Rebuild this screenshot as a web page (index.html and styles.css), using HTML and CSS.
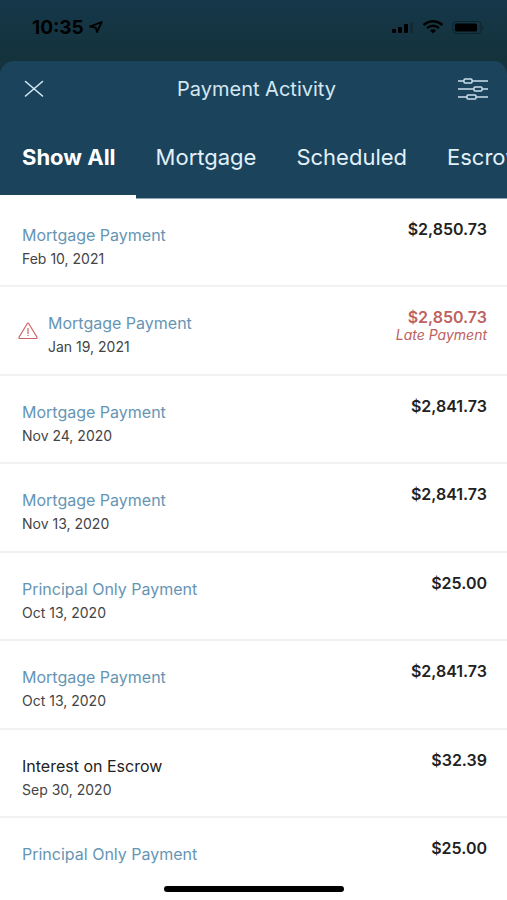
FILE: index.html
```html
<!DOCTYPE html>
<html lang="en">
  <head>
    <meta charset="utf-8">
    <meta name="viewport" content="width=device-width, initial-scale=1.0">
    <title>Payment Activity</title>
    <link rel="stylesheet" href="styles.css">
  </head>
  <body>
    <!-- Status bar -->
    <div class="status-bar">
      <div class="status-left">
        <span>10:35</span>
        <svg width="14" height="12" viewBox="0 0 14 12"><path d="M1 5.7 12.7 1 8 11 6.8 6.5Z" fill="none" stroke="#000" stroke-width="1.8" stroke-linejoin="round"/></svg>
      </div>
      <div class="status-right">
        <svg width="22" height="12" viewBox="0 0 22 12">
          <rect x="0" y="8" width="4" height="4" rx="1"/>
          <rect x="6" y="6" width="4" height="6" rx="1"/>
          <rect x="12" y="3" width="4" height="9" rx="1"/>
          <rect x="18" y="1" width="3" height="11" rx="1" opacity=".2"/>
        </svg>
        <svg width="22" height="14" viewBox="0 0 22 14">
          <path d="M1.500 5Q11-2.500 20.500 5M5 8Q11 3.500 17 8" fill="none" stroke="#000" stroke-width="2.400"/>
          <path d="M8 10.500Q11 8 14 10.500L11 13.500Z"/>
        </svg>
        <svg width="33" height="13" viewBox="0 0 33 13">
          <rect x="1" y=".5" width="28" height="12" rx="3" fill="none" stroke="#000" opacity=".35"/>
          <rect x="3" y="2.500" width="22" height="8" rx="1.500"/>
          <path d="M30.500 4.500q2 2 0 4z" opacity=".4"/>
        </svg>
      </div>
    </div>

    <main class="sheet">
      <header class="sheet-header">
        <button class="icon-btn" type="button" aria-label="Close">
          <svg width="20" height="18" viewBox="0 0 20 18"><path d="M1.500 1.500 18.500 16M18.500 1.500 1.500 16" fill="none" stroke="#d3e8f3" stroke-width="1.600" stroke-linecap="round"/></svg>
        </button>
        <h1>Payment Activity</h1>
        <button class="icon-btn" type="button" aria-label="Filter">
          <svg width="32" height="24" viewBox="0 0 32 24" fill="none" stroke="#c9dfea" stroke-width="1.500">
            <path d="M1 4h6M15 4h16M1 12h16M25 12h6M1 20h9M19 20h12"/>
            <rect x="7" y="2" width="8" height="4" rx="1"/>
            <rect x="17" y="10" width="8" height="4" rx="1"/>
            <rect x="10" y="18" width="9" height="4" rx="1"/>
          </svg>
        </button>
      </header>

      <nav class="tabs">
        <a class="tab active" href="#all">Show All</a>
        <a class="tab" href="#mortgage">Mortgage</a>
        <a class="tab" href="#scheduled">Scheduled</a>
        <a class="tab" href="#escrow">Escrow</a>
      </nav>

      <ul class="payments">
        <li class="payment">
          <div class="details">
            <a class="name" href="#">Mortgage Payment</a>
            <p class="date">Feb 10, 2021</p>
          </div>
          <div class="amount">$2,850.73</div>
        </li>
        <li class="payment late">
          <svg class="warning" width="20" height="18" viewBox="0 0 20 18" fill="none" stroke="#cf6468" stroke-width="1.200">
            <path d="M9.300 1.500 1 15.300Q.5 16.500 1.800 16.500H18.200Q19.500 16.500 19 15.300L10.700 1.500Q10 .8 9.300 1.500Z"/>
            <path d="M10 6v6M10 13v1"/>
          </svg>
          <div class="details">
            <a class="name" href="#">Mortgage Payment</a>
            <p class="date">Jan 19, 2021</p>
          </div>
          <div class="amount">$2,850.73 <em>Late Payment</em></div>
        </li>
        <li class="payment">
          <div class="details">
            <a class="name" href="#">Mortgage Payment</a>
            <p class="date">Nov 24, 2020</p>
          </div>
          <div class="amount">$2,841.73</div>
        </li>
        <li class="payment">
          <div class="details">
            <a class="name" href="#">Mortgage Payment</a>
            <p class="date">Nov 13, 2020</p>
          </div>
          <div class="amount">$2,841.73</div>
        </li>
        <li class="payment">
          <div class="details">
            <a class="name" href="#">Principal Only Payment</a>
            <p class="date">Oct 13, 2020</p>
          </div>
          <div class="amount">$25.00</div>
        </li>
        <li class="payment">
          <div class="details">
            <a class="name" href="#">Mortgage Payment</a>
            <p class="date">Oct 13, 2020</p>
          </div>
          <div class="amount">$2,841.73</div>
        </li>
        <li class="payment">
          <div class="details">
            <span class="name">Interest on Escrow</span>
            <p class="date">Sep 30, 2020</p>
          </div>
          <div class="amount">$32.39</div>
        </li>
        <li class="payment">
          <div class="details">
            <a class="name" href="#">Principal Only Payment</a>
          </div>
          <div class="amount">$25.00</div>
        </li>
      </ul>
    </main>

    <div class="home-indicator"></div>
  </body>
</html>
```
FILE: styles.css
```css
* {
  margin: 0;
  padding: 0;
  box-sizing: border-box;
}

body {
  display: flex;
  flex-direction: column;
  min-height: 100vh;
  font-family: Inter, "Liberation Sans", sans-serif;
  background: #14333d;
  overflow-x: hidden;
}

svg {
  display: block;
  flex: none;
}

/* Status bar */
.status-bar {
  display: flex;
  justify-content: space-between;
  height: 61px;
  padding: 16px 22px 0 32px;
  background: linear-gradient(#15374a, #14323b);
}

.status-left,
.status-right {
  display: flex;
  align-items: center;
  height: 22px;
}

.status-left {
  gap: 5px;
  font-size: 19px;
  font-weight: 700;
  color: #000;
}

.status-right {
  gap: 8px;
}

/* Sheet */
.sheet {
  flex: 1;
  display: flex;
  flex-direction: column;
  background: #1c435c;
  border-radius: 14px 14px 0 0;
  overflow: hidden;
}

.sheet-header {
  display: flex;
  justify-content: space-between;
  align-items: center;
  height: 55px;
  padding: 0 18px 0 24px;
}

.sheet-header h1 {
  font-size: 20px;
  font-weight: 400;
  color: #d3e8f3;
}

.icon-btn {
  display: flex;
  width: 32px;
  background: none;
  border: none;
  cursor: pointer;
}

/* Tabs */
.tabs {
  display: flex;
  height: 83px;
  overflow: hidden;
  box-shadow: inset 0 -1px #8fa9b9;
}

.tab {
  flex: none;
  padding: 28px 20px 0;
  font-size: 22px;
  line-height: 26px;
  color: #e0f1fa;
  text-decoration: none;
}

.tab.active {
  padding-left: 22px;
  font-weight: 700;
  color: #fff;
  border-bottom: 4px solid #fff;
}

/* Payment list */
.payments {
  flex: 1;
  display: flex;
  flex-direction: column;
  list-style: none;
  background: #fff;
}

.payment {
  flex: 1;
  display: flex;
  gap: 10px;
  padding: 20px 20px 12px 22px;
  border-bottom: 2px solid #f1f2f3;
}

.payment:last-child {
  flex: 0 0 82px;
  border-bottom: none;
}

.payment.late {
  padding-left: 18px;
}

.warning {
  margin-top: 15px;
}

.details {
  flex: 1;
  padding-top: 4px;
}

.name {
  display: block;
  font-size: 16px;
  line-height: 24px;
  color: #222;
}

a.name {
  color: #6695b4;
  text-decoration: none;
}

.date {
  font-size: 14px;
  line-height: 24px;
  color: #444;
}

.amount {
  font-size: 16px;
  font-weight: 600;
  line-height: 20px;
  text-align: right;
  color: #222;
}

.amount em {
  display: block;
  font-size: 14px;
  font-weight: 400;
  line-height: 16px;
}

.late .amount {
  color: #bd6260;
}

.home-indicator {
  position: fixed;
  bottom: 8px;
  left: 50%;
  width: 180px;
  height: 6px;
  margin-left: -90px;
  border-radius: 3px;
  background: #000;
}
```
